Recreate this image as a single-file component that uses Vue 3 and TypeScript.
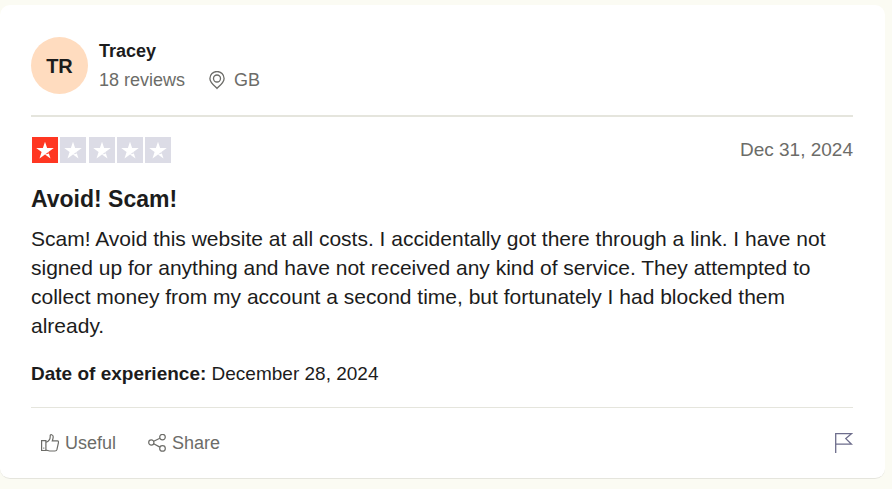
<script setup lang="ts">
interface Review {
  initials: string
  author: string
  reviewCount: number
  country: string
  rating: number
  date: string
  title: string
  body: string
  experienced: string
}

const review: Review = {
  initials: 'TR',
  author: 'Tracey',
  reviewCount: 18,
  country: 'GB',
  rating: 1,
  date: 'Dec 31, 2024',
  title: 'Avoid! Scam!',
  body: 'Scam! Avoid this website at all costs. I accidentally got there through a link. I have not signed up for anything and have not received any kind of service. They attempted to collect money from my account a second time, but fortunately I had blocked them already.',
  experienced: 'December 28, 2024',
}
</script>

<template>
  <main class="page">
    <article class="card">
      <header class="author">
        <span class="avatar">{{ review.initials }}</span>
        <div class="identity">
          <a class="name" href="#">{{ review.author }}</a>
          <div class="meta">
            <span>{{ review.reviewCount }} reviews</span>
            <span class="country">
              <svg class="pin" viewBox="0 0 16 19" aria-hidden="true">
                <path d="M8 17.400C6.600 15.700 0.900 12 0.900 7.500a7.100 7 0 0 1 14.200 0C15.100 12 9.400 15.700 8 17.400Z" />
                <circle cx="8" cy="7.500" r="3.500" />
              </svg>
              {{ review.country }}
            </span>
          </div>
        </div>
      </header>

      <div class="rating-row">
        <div class="stars" role="img" :aria-label="`Rated ${review.rating} out of 5 stars`">
          <span v-for="n in 5" :key="n" class="star" :class="{ filled: n <= review.rating }">
            <svg viewBox="0 0 26 26" aria-hidden="true">
              <path d="M13 4.800l2.100 6.200h6.700l-5.400 4 2.100 6.400L13 17.500l-5.500 3.900 2.100-6.400-5.400-4h6.700Z" />
              <path class="notch" d="M13 17.500l3.900-1.100-.5-1.300" />
            </svg>
          </span>
        </div>
        <time class="date" datetime="2024-12-31">{{ review.date }}</time>
      </div>

      <h2 class="title">{{ review.title }}</h2>
      <p class="body">{{ review.body }}</p>
      <p class="experience"><b>Date of experience:</b> {{ review.experienced }}</p>

      <footer class="actions">
        <button class="action" type="button">
          <svg class="icon" viewBox="0 0 18 18" aria-hidden="true">
            <path d="M.6 6.700h4.300v9.800H.6zM2.300 14.200h1" />
            <path d="M4.900 8.300c2-.6 4.300-2.700 4.300-5.500V1.600c0-1.400 3-1.300 3 1.200 0 1.800-.6 3.200-.9 4.100h5.200c1.100 0 1.100 1.200.9 2l-1.500 6.800c-.3 1.100-.9 1.300-1.900 1.300H8.600c-1.500 0-2.200-.9-3.700-.9" />
          </svg>
          Useful
        </button>
        <button class="action" type="button">
          <svg class="icon" viewBox="0 0 18 18" aria-hidden="true">
            <circle cx="3.300" cy="8.500" r="2.600" />
            <circle cx="14.500" cy="3.100" r="2.800" />
            <circle cx="14.500" cy="14.400" r="2.800" />
            <path d="M5.700 7.300l6.200-3M5.700 9.700l6.200 3.400" />
          </svg>
          Share
        </button>
        <button class="flag" type="button" aria-label="Report review">
          <svg viewBox="0 0 18 21" aria-hidden="true">
            <path d="M.7 20V.7h15.800L10.800 5.600l5.700 5.600H.7" />
          </svg>
        </button>
      </footer>
    </article>
  </main>
</template>

<style>
body {
  margin: 0;
  background: #fbfbf3;
}
</style>

<style scoped>
.page {
  padding: 5px 7px 10px 0;
  font-family: "Liberation Sans", Arial, sans-serif;
  font-size: 18px;
  line-height: 24px;
  color: #1c1c1c;
}

.card {
  padding: 32px 32px 20px 31px;
  border-bottom: 1px solid #e5e5dd;
  border-radius: 10px;
  background: #fff;
}

.author {
  display: flex;
  align-items: center;
  gap: 11px;
  padding-bottom: 21px;
  border-bottom: 2px solid #e5e5dd;
}

.avatar {
  display: grid;
  place-items: center;
  width: 57px;
  height: 57px;
  border-radius: 50%;
  background: #ffdcbf;
  font-size: 20px;
  font-weight: 700;
}

.identity {
  display: grid;
  gap: 5px;
}

.name {
  color: inherit;
  font-weight: 700;
  text-decoration: none;
}

.meta {
  display: flex;
  gap: 24px;
  color: #6c6c68;
}

.country {
  display: flex;
  align-items: center;
  gap: 9px;
}

svg {
  display: block;
  fill: none;
  stroke: currentColor;
}

.pin {
  width: 16px;
  height: 19px;
  stroke-width: 1.3;
}

.rating-row {
  display: flex;
  align-items: center;
  justify-content: space-between;
  padding: 20px 0 0 1px;
}

.stars {
  display: flex;
  justify-content: space-between;
  width: 139px;
}

.star {
  width: 26px;
  height: 26px;
  background: #dcdce6;
}

.star.filled {
  background: #ff3722;
}

.star svg {
  fill: #fff;
  stroke: none;
}

.star .notch {
  fill: #dcdce6;
}

.star.filled .notch {
  fill: #ff3722;
}

.date {
  color: #6c6c68;
  font-size: 19px;
}

.title {
  margin: 20px 0 9px;
  font-size: 23px;
  line-height: 32px;
}

.body {
  margin: 0;
  font-size: 21px;
  line-height: 29px;
}

.experience {
  margin: 22px 0 21px;
  font-size: 19px;
}

.actions {
  display: flex;
  align-items: center;
  gap: 32px;
  padding: 20px 0 0 10px;
  border-top: 1px solid #e5e5dd;
}

button {
  padding: 0;
  border: 0;
  background: none;
  font: inherit;
  cursor: pointer;
}

.action {
  display: flex;
  align-items: center;
  gap: 6px;
  height: 30px;
  color: #6c6c68;
}

.icon {
  width: 18px;
  height: 18px;
  stroke-width: 1.2;
}

.flag {
  margin-left: auto;
  color: #6d6d8c;
}

.flag svg {
  width: 18px;
  height: 21px;
  stroke-width: 1.3;
}
</style>
